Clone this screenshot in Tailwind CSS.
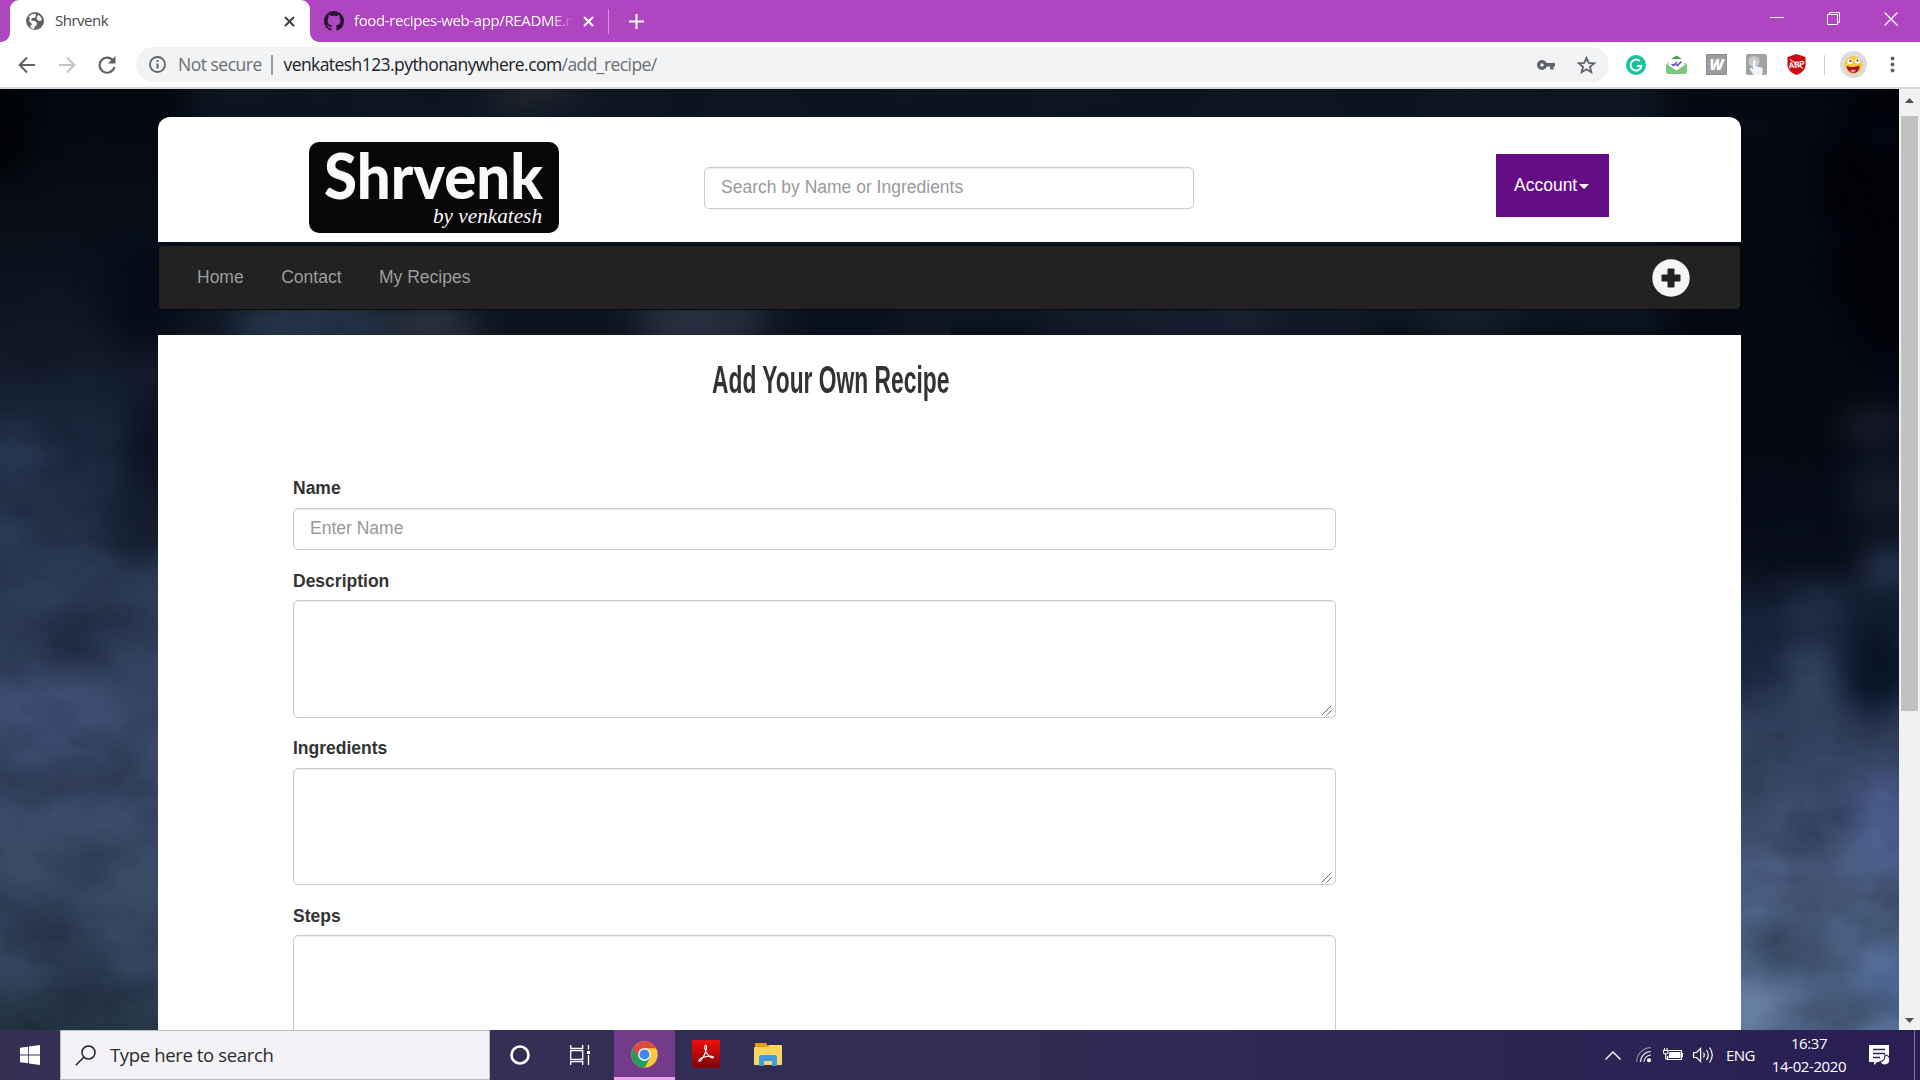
<!DOCTYPE html>
<html lang="en">
<head>
<meta charset="utf-8">
<title>Shrvenk</title>
<script src="https://cdn.jsdelivr.net/npm/@tailwindcss/browser@4"></script>
</head>
<body class="w-[1920px] h-[1080px] overflow-hidden flex flex-col bg-white font-['Open_Sans',sans-serif]">

<!-- Tab strip -->
<header class="h-[42px] bg-[#b045c2] flex items-stretch shrink-0">
  <div class="w-[10px] bg-white"><div class="w-full h-full bg-[#b045c2] rounded-br-[9px]"></div></div>
  <div class="w-[300px] bg-white rounded-t-[9px] flex items-center pl-4 pr-[15px]">
    <svg class="w-[18px] h-[18px]" viewBox="0 0 18 18"><circle cx="9" cy="9" r="9" fill="#5f6368"/><path d="M3 4.500C5 2 7.500 1.500 9.500 1.800L10 4 8.500 6H6L5 8.500 9 9l2 2-.5 2.500-2 1V17C4 16.500 1.500 13 1.500 9.500z" fill="#fff" opacity=".95"/><path d="M2 5C0 8 1 13 4 15l2-3-3-3 1-3z" fill="#5f6368"/><path d="M12 3l2 1 2 3-1.500 2-2.500-.5-1.500-2z" fill="#fff"/></svg>
    <span class="ml-[11px] mb-[2px] text-[15px] tracking-[-0.5px] text-[#45484c] leading-5">Shrvenk</span>
    <svg class="ml-auto w-[11px] h-[11px]" viewBox="0 0 11 11" stroke="#3c4043" stroke-width="2"><path d="M1 1l9 9M10 1l-9 9"/></svg>
  </div>
  <div class="w-[10px] bg-white"><div class="w-full h-full bg-[#b045c2] rounded-bl-[9px]"></div></div>
  <div class="flex items-center pl-[4px]">
    <svg class="w-5 h-5" viewBox="0 0 16 16" fill="#24152a"><path d="M8 0C3.580 0 0 3.580 0 8c0 3.540 2.290 6.530 5.470 7.590.4.07.55-.17.55-.38 0-.19-.01-.82-.01-1.490-2.010.37-2.530-.49-2.690-.94-.09-.23-.48-.94-.82-1.130-.28-.15-.68-.52-.01-.53.63-.01 1.080.58 1.230.82.72 1.210 1.870.87 2.330.66.07-.52.28-.87.51-1.070-1.780-.2-3.640-.89-3.640-3.950 0-.87.31-1.590.82-2.150-.08-.2-.36-1.020.08-2.120 0 0 .67-.21 2.200.82.64-.18 1.320-.27 2-.27s1.360.09 2 .27c1.530-1.040 2.200-.82 2.200-.82.44 1.100.16 1.920.08 2.120.51.56.82 1.270.82 2.150 0 3.070-1.870 3.750-3.650 3.950.29.25.54.73.54 1.480 0 1.070-.01 1.930-.01 2.200 0 .21.15.46.55.38A8.010 8.010 0 0016 8c0-4.420-3.580-8-8-8z"/></svg>
    <div class="ml-[10px] mb-[2px] w-[219px] overflow-hidden whitespace-nowrap text-[15px] tracking-[-0.38px] leading-5 text-white [mask-image:linear-gradient(to_right,#000_90%,transparent)]">food-recipes-web-app/README.md</div>
    <svg class="ml-[10px] w-[11px] h-[11px]" viewBox="0 0 11 11" stroke="#fff" stroke-width="2"><path d="M1 1l9 9M10 1l-9 9"/></svg>
    <div class="ml-[14px] w-px h-[25px] bg-[#d48fdf]"></div>
    <svg class="ml-5 w-[15px] h-[15px]" viewBox="0 0 15 15" stroke="#fff" stroke-width="2"><path d="M7.500 0v15M0 7.500h15"/></svg>
  </div>
  <div class="ml-auto flex pt-3 pr-[22px] gap-[43px]">
    <svg class="w-[14px] h-[14px]" viewBox="0 0 14 14" stroke="#fff"><path d="M0 5.500h14"/></svg>
    <svg class="w-[14px] h-[14px]" viewBox="0 0 14 14" stroke="#fff" fill="none"><path d="M.5 2.500h10v10H.5zM2.500 2.500V.5h10v10h-2"/></svg>
    <svg class="w-[14px] h-[14px]" viewBox="0 0 14 14" stroke="#fff" stroke-width="1.200"><path d="M.5.5l13 13M13.500.5l-13 13"/></svg>
  </div>
</header>

<!-- Toolbar -->
<div class="h-[47px] shrink-0 flex items-center border-b-2 border-[#d6d7dc] pl-[18px] bg-white">
  <svg class="w-[18px] h-[18px]" viewBox="0 0 18 18" fill="none" stroke="#5f6368" stroke-width="2"><path d="M17 9H2M9 1.500L1.700 9 9 16.500"/></svg>
  <svg class="ml-[22px] w-[18px] h-[18px]" viewBox="0 0 18 18" fill="none" stroke="#c0c3c7" stroke-width="2"><path d="M1 9h15M9 1.500L16.300 9 9 16.500"/></svg>
  <svg class="ml-[22px] w-[18px] h-[18px]" viewBox="0 0 18 18" fill="none" stroke="#5f6368" stroke-width="2.200"><path d="M15.200 4.800A7.500 7.500 0 1 0 16.400 11"/><path d="M17.500 0v7.500H10z" fill="#5f6368" stroke="none"/></svg>
  <div class="ml-5 w-[1473px] h-[35px] rounded-full bg-[#f1f3f4] flex items-center pl-[13px] pr-[13px]">
    <svg class="w-[17px] h-[17px]" viewBox="0 0 17 17" fill="none" stroke="#5f6368"><circle cx="8.500" cy="8.500" r="7.500" stroke-width="1.800"/><path d="M8.500 7.500v5M8.500 4v2" stroke-width="2"/></svg>
    <span class="ml-[12px] mb-px w-[84px] whitespace-nowrap text-[17.500px] tracking-[-0.5px] leading-6 text-[#6a6e73]">Not secure</span>
    <div class="ml-[9px] w-[1.500px] h-[20px] bg-[#9a9da1]"></div>
    <span class="ml-[11px] mb-px whitespace-nowrap text-[17.500px] tracking-[-0.57px] leading-6 text-[#202124]">venkatesh123.pythonanywhere.com<span class="text-[#6a6e73]">/add_recipe/</span></span>
    <svg class="ml-auto w-[18px] h-[10px]" viewBox="0 0 18 10" fill="none" stroke="#5f6368"><circle cx="5" cy="5" r="3.400" stroke-width="3.200"/><path d="M9 4.700h9M14.800 5v4.500" stroke-width="3.400"/></svg>
    <svg class="ml-[22px] w-[19px] h-[18px]" viewBox="0 0 19 18" fill="none" stroke="#5f6368" stroke-width="1.800"><path d="M9.500 1.800l2.200 5 5.500.5-4.200 3.600 1.300 5.300-4.800-2.900-4.800 2.900L6 10.900 1.800 7.300l5.500-.5z"/></svg>
  </div>
  <div class="ml-[17px] flex items-center">
    <svg class="w-5 h-5" viewBox="0 0 20 20" fill="none"><circle cx="10" cy="10" r="10" fill="#15c39a"/><path d="M13.800 6A5.500 5.500 0 1 0 15.500 11H11" stroke="#fff" stroke-width="1.900"/></svg>
    <svg class="ml-5 w-[21px] h-5" viewBox="0 0 21 20" fill="none"><path d="M5 4l5.500-3.500L16 4z" fill="#4ba153"/><path d="M1 8l3-1v4zM20 8l-3-1v4z" fill="#9fd49a"/><path d="M0 8.500l10.500 7 10.500-7V17a2 2 0 0 1-2 2H2a2 2 0 0 1-2-2z" fill="#7dc57c"/><path d="M3 4.500h15v6l-7.500 4-7.500-4z" fill="#fff"/><path d="M5.500 9l2 1.500L11 7M10 9.500l1.300 1L15.500 6.500" stroke="#4a3fc0" stroke-width="1.400"/></svg>
    <div class="ml-[19px] w-[21px] h-[21px] bg-[#9d9d9d] border border-[#8d8d8d] flex items-center justify-center text-white font-black italic text-[15px] leading-none">W</div>
    <svg class="ml-[19px] w-[21px] h-[21px]" viewBox="0 0 21 21"><rect width="21" height="21" rx="2" fill="#a2a2a2"/><circle cx="8" cy="7.500" r="5.500" fill="#cacaca"/><path d="M7 7c0-1.500 2.500-1.500 2.500 0v5l6 1.500c1 .3 1.500 1 1.300 2L16 21H7.500L3.500 15c0-1 1.500-1.500 2.500-.5l1 1z" fill="#eef4fb"/></svg>
    <svg class="ml-5 w-[19px] h-[21px]" viewBox="0 0 19 21"><path d="M9.500 0L18.500 3v8c0 5-4.500 8.500-9 10C5 19.500.5 16 .5 11V3z" fill="#c70d12"/><text x="1.500" y="13.500" font-size="8.500" font-weight="900" font-family="Liberation Sans" fill="#fff" textLength="16" lengthAdjust="spacingAndGlyphs" transform="rotate(-7 9 10)">ABP</text><path d="M3 5.500l13 9" stroke="#fff" stroke-width="1"/></svg>
    <div class="ml-[18px] w-px h-5 bg-[#cfd1d4]"></div>
    <svg class="ml-[15px] w-[27px] h-[27px]" viewBox="0 0 27 27"><circle cx="13.500" cy="13.500" r="13.500" fill="#dcdcdc"/><circle cx="13.500" cy="14" r="9" fill="#fbc73c"/><circle cx="10" cy="10.500" r="2.600" fill="#fff"/><circle cx="17.500" cy="10" r="2.600" fill="#fff"/><circle cx="10.500" cy="10" r="1" fill="#222"/><circle cx="17.500" cy="9.500" r="1" fill="#222"/><path d="M6.500 15q7 2 13-.5c.5 4-2.500 7.500-6 7.500s-6.500-3-7-7z" fill="#a31323"/><path d="M10 19.500q3.500-2 6 0-1.500 2-3 2t-3-2z" fill="#f08a9a"/></svg>
    <svg class="ml-[23px] w-[5px] h-[17px]" viewBox="0 0 5 17" fill="#5f6368"><circle cx="2.500" cy="2.500" r="2"/><circle cx="2.500" cy="8.500" r="2"/><circle cx="2.500" cy="14.500" r="2"/></svg>
  </div>
</div>

<!-- Web page -->
<div class="h-[941px] shrink-0 flex overflow-hidden">
<main class="relative w-[1899px] h-full overflow-hidden bg-[#060b14] font-['Liberation_Sans',Arial,sans-serif]">
  <!-- Smoke backdrop -->
  <svg class="absolute inset-0 w-[1899px] h-[941px]" viewBox="0 0 1899 941" preserveAspectRatio="none" color-interpolation-filters="sRGB">
    <defs>
      <linearGradient id="l" x2="0" y2="1"><stop offset="0" stop-color="#04060c"/><stop offset=".12" stop-color="#090e17"/><stop offset=".24" stop-color="#0e1622"/><stop offset=".34" stop-color="#172335"/><stop offset=".43" stop-color="#223047"/><stop offset=".52" stop-color="#2c3b55"/><stop offset=".63" stop-color="#344361"/><stop offset=".74" stop-color="#3c4c6c"/><stop offset=".84" stop-color="#3a4b66"/><stop offset=".94" stop-color="#33445c"/><stop offset="1" stop-color="#283848"/></linearGradient>
      <linearGradient id="r" x2="0" y2="1"><stop offset="0" stop-color="#050912"/><stop offset=".35" stop-color="#040812"/><stop offset=".5" stop-color="#080e1a"/><stop offset=".56" stop-color="#172338"/><stop offset=".63" stop-color="#222f4a"/><stop offset=".7" stop-color="#384766"/><stop offset=".78" stop-color="#485a7e"/><stop offset=".88" stop-color="#516589"/><stop offset="1" stop-color="#5a7095"/></linearGradient>
      <filter id="b" x="-5%" y="-5%" width="110%" height="110%"><feGaussianBlur stdDeviation="15"/></filter>
      <filter id="n" x="0" y="0" width="100%" height="100%"><feTurbulence type="fractalNoise" baseFrequency=".009 .014" numOctaves="4" seed="5"/><feColorMatrix values="0 0 0 0 .02  0 0 0 0 .05  0 0 0 0 .1  2.200 0 0 0 -.85"/></filter>
    </defs>
    <rect width="950" height="941" fill="url(#l)"/>
    <rect x="950" width="949" height="941" fill="url(#r)"/>
    <g filter="url(#b)">
      <rect x="185" y="-40" width="1480" height="290" fill="#0e1621"/>
      <ellipse cx="0" cy="0" rx="40" ry="90" fill="#000103"/>
      <ellipse cx="145" cy="200" rx="40" ry="60" fill="#060d19"/>
      <ellipse cx="155" cy="370" rx="30" ry="80" fill="#0c1422"/>
      <ellipse cx="140" cy="430" rx="35" ry="45" fill="#152030"/>
      <ellipse cx="10" cy="400" rx="45" ry="60" fill="#2a3a55"/>
      <ellipse cx="70" cy="550" rx="35" ry="15" fill="#24324b"/>
      <ellipse cx="50" cy="630" rx="70" ry="50" fill="#3f4d72"/>
      <ellipse cx="40" cy="930" rx="120" ry="12" fill="#263742"/>
      <ellipse cx="310" cy="235" rx="80" ry="30" fill="#26354a"/>
      <ellipse cx="430" cy="235" rx="50" ry="20" fill="#2c3441"/>
      <ellipse cx="540" cy="10" rx="60" ry="20" fill="#20252f"/>
      <ellipse cx="700" cy="230" rx="70" ry="30" fill="#273140"/>
      <ellipse cx="850" cy="235" rx="50" ry="25" fill="#0a101d"/>
      <ellipse cx="1200" cy="235" rx="170" ry="20" fill="#1a2334"/>
      <ellipse cx="1470" cy="230" rx="50" ry="20" fill="#1b2330"/>
      <ellipse cx="1880" cy="120" rx="60" ry="150" fill="#010207"/>
      <ellipse cx="1875" cy="335" rx="35" ry="12" fill="#232a36"/>
      <ellipse cx="1885" cy="400" rx="40" ry="35" fill="#161e2e"/>
      <ellipse cx="1890" cy="480" rx="30" ry="25" fill="#26334c"/>
      <ellipse cx="1815" cy="520" rx="35" ry="20" fill="#223048"/>
      <ellipse cx="1812" cy="595" rx="28" ry="40" fill="#33445f"/>
      <ellipse cx="1875" cy="580" rx="35" ry="45" fill="#0a1426"/>
      <ellipse cx="1750" cy="690" rx="22" ry="30" fill="#34435c"/>
      <ellipse cx="1885" cy="730" rx="35" ry="50" fill="#4d5f90"/>
      <ellipse cx="1785" cy="865" rx="38" ry="18" fill="#30425a"/>
      <ellipse cx="1890" cy="890" rx="30" ry="30" fill="#526c9a"/>
      <ellipse cx="1750" cy="920" rx="30" ry="25" fill="#6b83a5"/>
    </g>
    <rect width="1899" height="941" filter="url(#n)" opacity=".32"/>
  </svg>

  <div class="relative ml-[158px] w-[1583px] pt-[28px]">
    <div class="h-[125px] bg-white rounded-t-[12px] flex items-start">
      <div class="ml-[151px] mt-[25px] w-[250px] h-[91px] rounded-[10px] bg-[#090708]">
        <svg class="w-full h-full" viewBox="0 0 250 91" fill="#faf8fa">
          <text x="15" y="57" font-family="Lato, sans-serif" font-weight="900" font-size="63" textLength="219" lengthAdjust="spacingAndGlyphs">Shrvenk</text>
          <text x="124" y="81" font-family="'Liberation Serif',cursive" font-style="italic" font-size="21" textLength="109" lengthAdjust="spacingAndGlyphs">by venkatesh</text>
        </svg>
      </div>
      <div class="ml-[145px] mt-[50px] w-[490px] h-[42px] rounded-[5px] border border-[#ccc] bg-white shadow-[inset_0_1px_1px_rgba(0,0,0,0.075)] px-4 text-[17.500px] leading-[39px] text-[#999]">Search by Name or Ingredients</div>
      <div class="ml-[302px] mt-[37px] w-[113px] h-[63px] bg-[#640d85] flex items-center pl-[18px] pb-px text-[17.500px] text-white"><span>Account</span><svg class="ml-[2px] mt-[3px] w-[10px] h-[5px]" viewBox="0 0 10 5"><path d="M0 0h10L5 5z" fill="#fff"/></svg></div>
    </div>
    <nav class="mt-[3px] h-[65px] rounded-[5px] bg-[#222] border border-[#080808] flex items-center pl-[38px] pr-[50px] gap-[37.500px] text-[17.500px] leading-[25px] text-[#9d9d9d]">
      <span>Home</span><span>Contact</span><span>My Recipes</span>
      <svg class="ml-auto w-[38px] h-[38px]" viewBox="0 0 38 38"><circle cx="19" cy="19" r="18.700" fill="#f5f5f5"/><path d="M16.300 9.500h5.400q.8 0 .8.800v5.200h5.200q.8 0 .8.800v5.400q0 .8-.8.800h-5.200v5.200q0 .8-.8.800h-5.400q-.8 0-.8-.8v-5.200h-5.200q-.8 0-.8-.8v-5.400q0-.8.800-.8h5.200v-5.200q0-.8.800-.8z" fill="#222"/></svg>
    </nav>
    <section class="mt-[25px] h-[800px] bg-white pl-[135px] pt-[18px] text-[#333]">
      <h1 class="ml-[419px] h-[60px] text-[38px] leading-[54px] font-bold"><span class="inline-block origin-left scale-x-[0.6] whitespace-nowrap">Add Your Own Recipe</span></h1>
      <div class="mt-[63px] w-[1043px] flex flex-col text-[17.500px] leading-[25px]">
        <label class="font-bold">Name</label>
        <div class="mt-[7px] h-[42px] rounded-[5px] border border-[#ccc] shadow-[inset_0_1px_1px_rgba(0,0,0,0.075)] px-4 leading-[38px] text-[#999]">Enter Name</div>
        <label class="mt-[19px] font-bold">Description</label>
        <div class="mt-[6px] h-[118px] rounded-[5px] border border-[#ccc] shadow-[inset_0_1px_1px_rgba(0,0,0,0.075)] flex items-end justify-end pr-[3px] pb-px"><svg class="w-[11px] h-[11px]" viewBox="0 0 11 11" stroke="#666"><path d="M.5 10.500l10-10M5.500 10.500l5-5"/></svg></div>
        <label class="mt-[18px] font-bold">Ingredients</label>
        <div class="mt-[7px] h-[117px] rounded-[5px] border border-[#ccc] shadow-[inset_0_1px_1px_rgba(0,0,0,0.075)] flex items-end justify-end pr-[3px] pb-px"><svg class="w-[11px] h-[11px]" viewBox="0 0 11 11" stroke="#666"><path d="M.5 10.500l10-10M5.500 10.500l5-5"/></svg></div>
        <label class="mt-[19px] font-bold">Steps</label>
        <div class="mt-[6px] h-[118px] rounded-[5px] border border-[#ccc] shadow-[inset_0_1px_1px_rgba(0,0,0,0.075)]"></div>
      </div>
    </section>
  </div>
</main>
<!-- Scrollbar -->
<div class="w-[21px] bg-[#f1f1f1] flex flex-col items-center py-[9px]">
  <svg class="w-[9px] h-[5px]" viewBox="0 0 9 5"><path d="M0 5L4.500 0 9 5z" fill="#505050"/></svg>
  <div class="mt-[13px] w-[17px] h-[595px] bg-[#c1c1c1]"></div>
  <svg class="mt-auto -mb-[2px] w-[9px] h-[5px]" viewBox="0 0 9 5"><path d="M0 0h9L4.500 5z" fill="#505050"/></svg>
</div>
</div>

<!-- Taskbar -->
<footer class="h-[50px] shrink-0 flex items-center bg-linear-to-r from-[#353155] via-[#322c54] to-[#2a1e53] text-white">
  <div class="w-[60px] flex justify-center"><svg class="w-5 h-5" viewBox="0 0 20 20" fill="#fff"><path d="M0 2.800L8.200 1.700v7.900H0zM9 1.500L20 0v9.600H9zM0 10.400h8.200v7.900L0 17.200zM9 10.400h11V20L9 18.500z"/></svg></div>
  <div class="w-[430px] h-[50px] bg-[#f4f2f6] border border-[#bcbac0] flex items-center pl-[14px]">
    <svg class="w-[21px] h-[21px]" viewBox="0 0 21 21" fill="none" stroke="#222" stroke-width="1.500"><circle cx="13.500" cy="7.500" r="6.500"/><path d="M9 12L.8 20.200"/></svg>
    <span class="ml-[14px] text-[18.500px] tracking-[-0.36px] text-[#2b2b2b] whitespace-nowrap">Type here to search</span>
  </div>
  <svg class="ml-5 w-5 h-5" viewBox="0 0 20 20" fill="none" stroke="#fff" stroke-width="2.600"><circle cx="10" cy="10" r="8.500"/></svg>
  <svg class="ml-[40px] w-5 h-5" viewBox="0 0 20 20" fill="none" stroke="#fff" stroke-width="1.300"><path d="M.7 0v3.500h12V0M.7 5.700h12v8.600H.7zM.7 20v-3.500h12V20M18.500 0v4.500M18.500 10v10"/><path d="M17 6h3v3h-3z" fill="#fff" stroke="none"/></svg>
  <div class="ml-6 w-[61px] h-[50px] bg-[#733b8a] border-b-[3px] border-[#e8a5ec] flex items-center justify-center">
    <svg class="mt-[2px] w-[27px] h-[27px]" viewBox="0 0 48 48"><circle cx="24" cy="24" r="23.500" fill="#fdc83b"/><path d="M24 24L3.700 12.200A23.500 23.500 0 0 0 24 47.500L34.200 29.900z" fill="#20a05a"/><path d="M3.700 12.200A23.500 23.500 0 0 1 44.800 13H24L13.800 29.900z" fill="#dd4b3e"/><circle cx="24" cy="24" r="11.500" fill="#f4f4f4"/><circle cx="24" cy="24" r="9" fill="#4587f3"/></svg>
  </div>
  <svg class="ml-[17px] mb-[2px] w-7 h-7" viewBox="0 0 28 28" fill="none"><defs><linearGradient id="pdf" x2="0" y2="1"><stop stop-color="#f20d0d"/><stop offset="1" stop-color="#7c0508"/></linearGradient></defs><rect width="28" height="28" rx="1" fill="url(#pdf)"/><path d="M7 21c-1-2 6-5 11-5 5 0 4 3 1 1.500-4-2-7-8-6-11.500.8-2 2.500 0 1 4.500C12.500 15.500 9 22 7 21z" stroke="#fff" stroke-width="1.100"/></svg>
  <svg class="ml-[34px] w-7 h-6" viewBox="0 0 28 24"><path d="M1 1q0-1 1-1h10l2 3v5H1z" fill="#e0a012"/><path d="M1 4h12l2-2h12q1 0 1 1v18q0 1-1 1H1q-1 0-1-1V5q0-1 1-1z" fill="#ffd562"/><path d="M5 23v-9q0-2 2-2h14q2 0 2 2v9h-5v-5h-8v5z" fill="#3d9be0"/></svg>

  <div class="ml-auto flex items-center">
    <svg class="w-4 h-[9px]" viewBox="0 0 16 9" fill="none" stroke="#fff" stroke-width="1.400"><path d="M.5 8.500L8 1l7.500 7.500"/></svg>
    <svg class="ml-[15px] w-4 h-4" viewBox="0 0 16 16" fill="none" stroke="#fff" stroke-width="1.200"><path d="M.7 15A14.300 14.300 0 0 1 15 .7" opacity=".45"/><path d="M4.500 15A10.500 10.500 0 0 1 15 4.500M8 15a7 7 0 0 1 7-7" opacity=".9"/><circle cx="13" cy="13.200" r="2" fill="#fff" stroke="none"/></svg>
    <svg class="ml-[11px] w-5 h-[14px]" viewBox="0 0 20 14" fill="none" stroke="#fff" stroke-width="1.100"><path d="M6 2.500h12.500v9h-14V8"/><path d="M7 4.500h10v5H6z" fill="#fff"/><path d="M1.500 0v2M4 0v2M.5 2.500H5V5q-2.200 2-4.500 0zM2.700 6v5h2"/><path d="M19.500 5v4"/></svg>
    <svg class="ml-[10px] w-[21px] h-[18px]" viewBox="0 0 21 18" fill="none" stroke="#fff" stroke-width="1.200"><path d="M.6 6.500h3l4-4v13l-4-4h-3z"/><path d="M10.500 6.500q1.500 2.500 0 5M13.500 4q3.500 5 0 10M16.500 1.500q5.500 7.500 0 15"/></svg>
    <span class="ml-[12px] w-7 text-[15px] tracking-[-0.6px]">ENG</span>
    <div class="ml-[17px] w-[76px] text-center text-[15px] leading-[23px] tracking-[-0.4px] whitespace-nowrap"><div>16:37</div><div>14-02-2020</div></div>
    <svg class="ml-[22px] w-[21px] h-5" viewBox="0 0 21 20" fill="none"><path d="M0 0h20v17H8l-3 3v-3H0z" fill="#fff"/><path d="M4 4.500h12M4 8.500h12M4 12.500h7" stroke="#2c2154" stroke-width="1.400"/><path d="M16 10a5 5 0 1 1-5 6.500q5 0 5-6.500z" fill="#fff" stroke="#2c2154" stroke-width="1.200"/></svg>
    <div class="ml-[24px] mr-[5px] w-px h-[50px] bg-[#7f779a]"></div>
  </div>
</footer>
</body>
</html>
